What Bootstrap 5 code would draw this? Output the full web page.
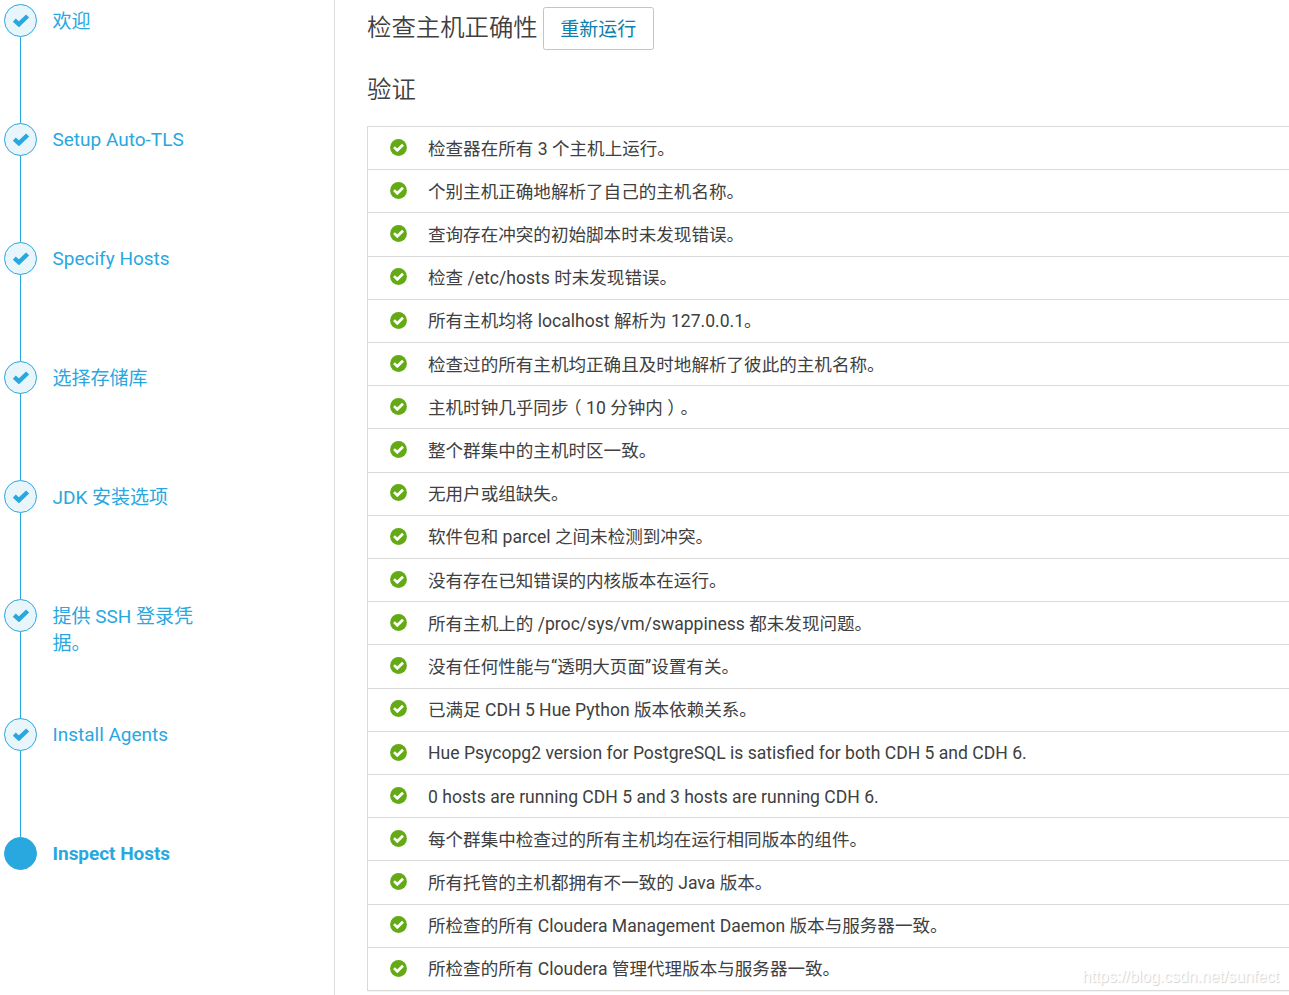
<!DOCTYPE html>
<html lang="zh-CN">
<head>
<meta charset="utf-8">
<meta name="viewport" content="width=device-width, initial-scale=1">
<title>检查主机正确性</title>
<link href="https://cdn.jsdelivr.net/npm/bootstrap@5.3.0/dist/css/bootstrap.min.css" rel="stylesheet">
<style>
body{font-family:Roboto,"Noto Sans CJK SC",sans-serif;font-size:17.57px;color:#404040;height:995px;overflow:hidden;background:#fff}
.wizard{width:335px;border-right:1px solid #ddd;padding:4px 0 0 4px}
.step{height:119.05px;color:#29a7df;font-size:19px;line-height:27px}
.rail{width:33px}
.dot{width:33px;height:33px;border:1.5px solid #29a7df;border-radius:50%;background:#e8f5fb}
.dot svg{margin:-2px 0 0 0}
.rail-line{width:1.4px;background:#29a7df;margin-left:.2px}
.step-label{width:146px;margin-left:15.5px;padding-top:3px}
.step-label:lang(zh-Hans){padding-top:4px}
.step.current{font-weight:700;letter-spacing:-.04px}
.step.current .dot{background:#29a7df}
.content{padding:7px 0 0 32px}
.title{font-size:24.4px;line-height:42px;font-weight:350;color:#404040}
.section-title{margin-top:19px}
.rerun{width:111px;height:43px;border:1px solid #c4c4c4;border-radius:2.5px;color:#0b7fad;font-size:19px;line-height:27px;margin-left:5px;padding:8px 0}
.checks{margin-top:15px;border-top:1px solid #d9d9d9;border-left:1px solid #d9d9d9;border-radius:0;width:922px}
.checks .list-group-item{height:43.21px;border:0;border-bottom:1px solid #d9d9d9;box-shadow:0 1px #f5f5f5;color:#404040;padding:0 0 0 22px;line-height:26px}
.checks svg{margin-top:-1.6px}
.check-text{margin-left:21px;padding-top:.8px;white-space:nowrap}
.paren{display:inline-block;width:1em;line-height:1;text-align:center;font-feature-settings:"halt"}
.watermark{right:10px;bottom:8px;font:15.8px/20px "Liberation Sans",Arial,sans-serif;color:#fff;text-shadow:1px 1px 1px #d0d0d0;z-index:5}
</style>
</head>
<body>
<svg class="d-none" xmlns="http://www.w3.org/2000/svg">
<symbol id="tick" viewBox="0 0 18 14"><path d="M2.3 7.1 6.9 11.3 15.6 3" fill="none" stroke="#29a7df" stroke-width="4.4"/></symbol>
<symbol id="ok" viewBox="0 0 17 17"><circle cx="8.5" cy="8.5" r="8.4" fill="#64aa14"/><path d="M4 8.1 7.3 11.3 13 5.7" fill="none" stroke="#fff" stroke-width="2.7"/></symbol>
</svg>
<div class="d-flex h-100">
<aside class="wizard flex-shrink-0 h-100">
<div class="step d-flex"><div class="rail d-flex flex-column align-items-center"><div class="dot flex-shrink-0 d-flex align-items-center justify-content-center"><svg width="18" height="14"><use href="#tick"/></svg></div><div class="rail-line flex-grow-1"></div></div><div class="step-label" lang="zh-Hans">欢迎</div></div>
<div class="step d-flex"><div class="rail d-flex flex-column align-items-center"><div class="dot flex-shrink-0 d-flex align-items-center justify-content-center"><svg width="18" height="14"><use href="#tick"/></svg></div><div class="rail-line flex-grow-1"></div></div><div class="step-label">Setup Auto-TLS</div></div>
<div class="step d-flex"><div class="rail d-flex flex-column align-items-center"><div class="dot flex-shrink-0 d-flex align-items-center justify-content-center"><svg width="18" height="14"><use href="#tick"/></svg></div><div class="rail-line flex-grow-1"></div></div><div class="step-label">Specify Hosts</div></div>
<div class="step d-flex"><div class="rail d-flex flex-column align-items-center"><div class="dot flex-shrink-0 d-flex align-items-center justify-content-center"><svg width="18" height="14"><use href="#tick"/></svg></div><div class="rail-line flex-grow-1"></div></div><div class="step-label" lang="zh-Hans">选择存储库</div></div>
<div class="step d-flex"><div class="rail d-flex flex-column align-items-center"><div class="dot flex-shrink-0 d-flex align-items-center justify-content-center"><svg width="18" height="14"><use href="#tick"/></svg></div><div class="rail-line flex-grow-1"></div></div><div class="step-label" lang="zh-Hans">JDK 安装选项</div></div>
<div class="step d-flex"><div class="rail d-flex flex-column align-items-center"><div class="dot flex-shrink-0 d-flex align-items-center justify-content-center"><svg width="18" height="14"><use href="#tick"/></svg></div><div class="rail-line flex-grow-1"></div></div><div class="step-label" lang="zh-Hans">提供 SSH 登录凭据。</div></div>
<div class="step d-flex"><div class="rail d-flex flex-column align-items-center"><div class="dot flex-shrink-0 d-flex align-items-center justify-content-center"><svg width="18" height="14"><use href="#tick"/></svg></div><div class="rail-line flex-grow-1"></div></div><div class="step-label">Install Agents</div></div>
<div class="step current d-flex"><div class="rail"><div class="dot"></div></div><div class="step-label">Inspect Hosts</div></div>
</aside>
<main class="content flex-grow-1">
<div class="d-flex"><h1 class="title mb-0">检查主机正确性</h1><button type="button" class="btn rerun">重新运行</button></div>
<h2 class="title section-title mb-0">验证</h2>
<ul class="list-group checks">
<li class="list-group-item d-flex align-items-center"><svg width="17" height="17"><use href="#ok"/></svg><span class="check-text">检查器在所有 3 个主机上运行。</span></li>
<li class="list-group-item d-flex align-items-center"><svg width="17" height="17"><use href="#ok"/></svg><span class="check-text">个别主机正确地解析了自己的主机名称。</span></li>
<li class="list-group-item d-flex align-items-center"><svg width="17" height="17"><use href="#ok"/></svg><span class="check-text">查询存在冲突的初始脚本时未发现错误。</span></li>
<li class="list-group-item d-flex align-items-center"><svg width="17" height="17"><use href="#ok"/></svg><span class="check-text">检查 /etc/hosts 时未发现错误。</span></li>
<li class="list-group-item d-flex align-items-center"><svg width="17" height="17"><use href="#ok"/></svg><span class="check-text">所有主机均将 localhost 解析为 127.0.0.1。</span></li>
<li class="list-group-item d-flex align-items-center"><svg width="17" height="17"><use href="#ok"/></svg><span class="check-text">检查过的所有主机均正确且及时地解析了彼此的主机名称。</span></li>
<li class="list-group-item d-flex align-items-center"><svg width="17" height="17"><use href="#ok"/></svg><span class="check-text">主机时钟几乎同步<span class="paren">（</span>10 分钟内<span class="paren">）</span>。</span></li>
<li class="list-group-item d-flex align-items-center"><svg width="17" height="17"><use href="#ok"/></svg><span class="check-text">整个群集中的主机时区一致。</span></li>
<li class="list-group-item d-flex align-items-center"><svg width="17" height="17"><use href="#ok"/></svg><span class="check-text">无用户或组缺失。</span></li>
<li class="list-group-item d-flex align-items-center"><svg width="17" height="17"><use href="#ok"/></svg><span class="check-text">软件包和 parcel 之间未检测到冲突。</span></li>
<li class="list-group-item d-flex align-items-center"><svg width="17" height="17"><use href="#ok"/></svg><span class="check-text">没有存在已知错误的内核版本在运行。</span></li>
<li class="list-group-item d-flex align-items-center"><svg width="17" height="17"><use href="#ok"/></svg><span class="check-text">所有主机上的 /proc/sys/vm/swappiness 都未发现问题。</span></li>
<li class="list-group-item d-flex align-items-center"><svg width="17" height="17"><use href="#ok"/></svg><span class="check-text">没有任何性能与“透明大页面”设置有关。</span></li>
<li class="list-group-item d-flex align-items-center"><svg width="17" height="17"><use href="#ok"/></svg><span class="check-text">已满足 CDH 5 Hue Python 版本依赖关系。</span></li>
<li class="list-group-item d-flex align-items-center"><svg width="17" height="17"><use href="#ok"/></svg><span class="check-text">Hue Psycopg2 version for PostgreSQL is satisfied for both CDH 5 and CDH 6.</span></li>
<li class="list-group-item d-flex align-items-center"><svg width="17" height="17"><use href="#ok"/></svg><span class="check-text">0 hosts are running CDH 5 and 3 hosts are running CDH 6.</span></li>
<li class="list-group-item d-flex align-items-center"><svg width="17" height="17"><use href="#ok"/></svg><span class="check-text">每个群集中检查过的所有主机均在运行相同版本的组件。</span></li>
<li class="list-group-item d-flex align-items-center"><svg width="17" height="17"><use href="#ok"/></svg><span class="check-text">所有托管的主机都拥有不一致的 Java 版本。</span></li>
<li class="list-group-item d-flex align-items-center"><svg width="17" height="17"><use href="#ok"/></svg><span class="check-text">所检查的所有 Cloudera Management Daemon 版本与服务器一致。</span></li>
<li class="list-group-item d-flex align-items-center"><svg width="17" height="17"><use href="#ok"/></svg><span class="check-text">所检查的所有 Cloudera 管理代理版本与服务器一致。</span></li>
</ul>
</main>
</div>
<div class="watermark position-absolute">https://blog.csdn.net/sunfect</div>
<script src="https://cdn.jsdelivr.net/npm/bootstrap@5.3.0/dist/js/bootstrap.bundle.min.js"></script>
</body>
</html>
